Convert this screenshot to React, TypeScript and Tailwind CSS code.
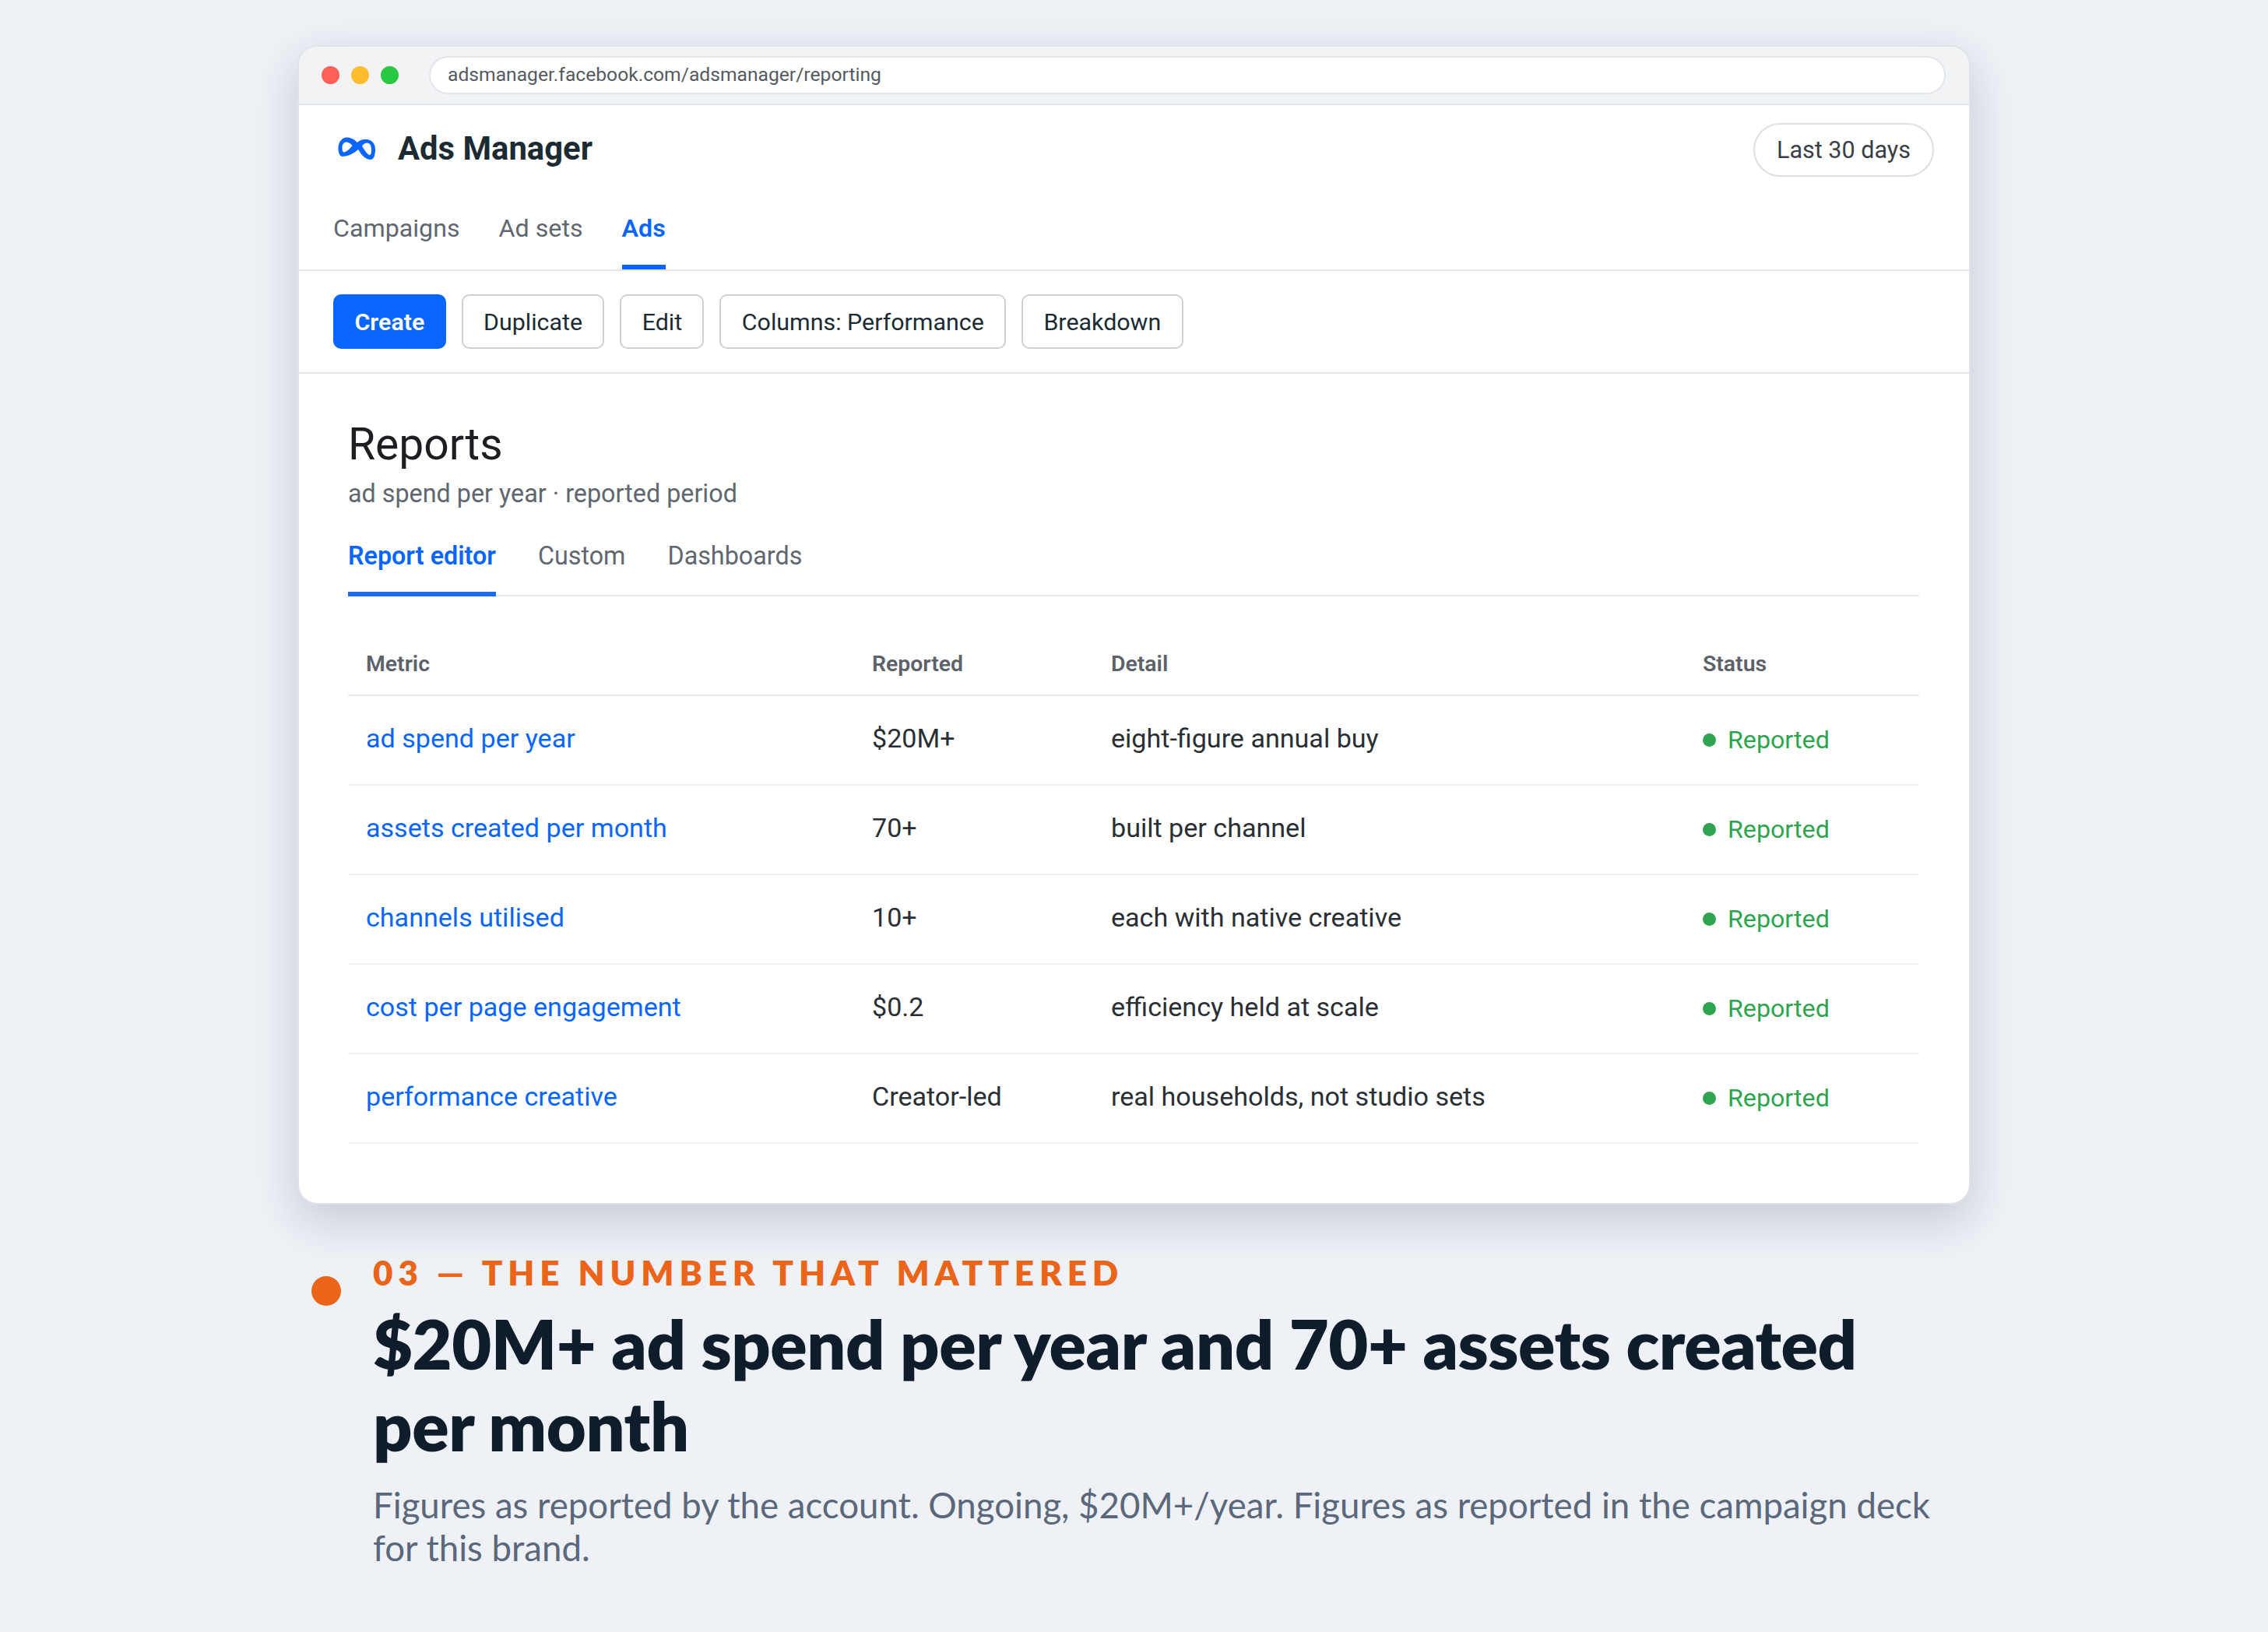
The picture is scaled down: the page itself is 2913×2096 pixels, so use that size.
const rows = [
  { metric: 'ad spend per year', value: '$20M+', detail: 'eight-figure annual buy' },
  { metric: 'assets created per month', value: '70+', detail: 'built per channel' },
  { metric: 'channels utilised', value: '10+', detail: 'each with native creative' },
  { metric: 'cost per page engagement', value: '$0.2', detail: 'efficiency held at scale' },
  { metric: 'performance creative', value: 'Creator-led', detail: 'real households, not studio sets' },
];

const toolbarButtons = ['Duplicate', 'Edit', 'Columns: Performance', 'Breakdown'];

function MetaLogo() {
  return (
    <svg viewBox="0 0 48 29" className="mb-[2px] ml-[6px] h-[29px] w-[48px]" fill="#0866ff">
      <path
        fillRule="evenodd"
        d="M0.5 14C0.5 6 6 0 12 0.5 18 1 22 4 25 7 28 4 32 2.5 37 3 44 3.5 48 9 48 16 48 23 46 29 42 29 36 29 31 24 26 16 21 21 12 25 6 25 2 25 0.5 20 0.5 14ZM5.5 13C5.5 16 6 19.5 7.5 19.5 11 19.5 15.5 15 18.5 11 16 8 13.5 6.5 11 6.5 8 6.5 5.5 9 5.5 13ZM31 11.5C34 16.5 38 23 41 23 42.5 23 43 20 43 16 43 11 41 7.5 37.5 7.5 35 7.5 33 8.5 31 11.5Z"
      />
    </svg>
  );
}

export default function App() {
  return (
    <div className="min-h-screen bg-[#eef1f6] pt-[58px] font-['Roboto',sans-serif]">
      <div className="mx-auto w-[2149px]">
        {/* Browser window */}
        <div className="overflow-hidden rounded-[26px] border-2 border-[#dfe2e9] bg-white shadow-[0_20px_60px_rgba(20,32,60,0.19)]">
          <div className="flex h-[75px] items-center border-b-2 border-[#e2e5ea] bg-[#f1f3f5] pr-[30px] pl-[29px]">
            <div className="flex items-center gap-[15px]">
              <span className="h-[23px] w-[23px] rounded-full bg-[#ff5f57]" />
              <span className="h-[23px] w-[23px] rounded-full bg-[#febc2e]" />
              <span className="h-[23px] w-[23px] rounded-full bg-[#28c840]" />
            </div>
            <div className="ml-[39px] flex h-[49px] flex-1 items-center rounded-full border-2 border-[#e2e5ea] bg-white pl-[22px] text-[24.65px] text-[#555a62]">
              adsmanager.facebook.com/adsmanager/reporting
            </div>
          </div>

          <div className="border-b-2 border-[#e2e5ea] pt-[23px] pr-[45px] pl-[44px]">
            <div className="flex h-[69px] items-center justify-between">
              <div className="flex items-center gap-[29px] pb-[3px]">
                <MetaLogo />
                <span className="text-[41.8px] font-bold text-[#1c2b33]">Ads Manager</span>
              </div>
              <div className="flex h-[69px] w-[232px] items-center justify-center rounded-full border-2 border-[#dcdfe4] text-[30.5px] text-[#3a3f47]">
                Last 30 days
              </div>
            </div>
            <div className="mt-[46px] flex gap-[50px] text-[32.2px] leading-[40px]">
              <span className="pb-[33px] text-[#606770]">Campaigns</span>
              <span className="pb-[33px] text-[#606770]">Ad sets</span>
              <span className="border-b-[6px] border-[#0866ff] pb-[27px] font-semibold text-[#0866ff]">Ads</span>
            </div>
          </div>

          <div className="flex gap-[20px] border-b-2 border-[#e2e5ea] py-[30px] pr-[45px] pl-[44px] text-[30.4px]">
            <div className="flex h-[70px] items-center rounded-[10px] bg-[#0866ff] px-[27.5px] pt-[2px] font-semibold text-white">
              Create
            </div>
            {toolbarButtons.map((label) => (
              <div
                key={label}
                className="flex h-[70px] items-center rounded-[10px] border-2 border-[#ced0d4] px-[26.3px] pt-[2px] text-[#1c2b33]"
              >
                {label}
              </div>
            ))}
          </div>

          {/* Reports */}
          <div className="pt-[57.5px] pr-[64px] pb-[76px] pl-[63px]">
            <h1 className="text-[57px] leading-[66px] text-[#1c1e21]">Reports</h1>
            <p className="mt-[8px] text-[32.3px] leading-[44px] text-[#606770]">ad spend per year · reported period</p>

            <div className="mt-[38px] flex gap-[54px] border-b-2 border-[#e8eaed] text-[32.3px] leading-[40px]">
              <span className="-mb-[2px] border-b-[6px] border-[#1a6fe8] pb-[26px] font-semibold text-[#0866ff]">Report editor</span>
              <span className="pb-[26px] text-[#606770]">Custom</span>
              <span className="pb-[26px] text-[#606770]">Dashboards</span>
            </div>

            <div className="grid grid-cols-[650px_307px_760px_301px] border-b-2 border-[#e8eaed] pt-[69px] pb-[21px] text-[28.4px] leading-[36px] font-semibold text-[#5d6169]">
              <div className="pl-[23px]">Metric</div>
              <div className="pl-[23px]">Reported</div>
              <div className="pl-[23px]">Detail</div>
              <div className="pl-[23px]">Status</div>
            </div>

            {rows.map((row) => (
              <div
                key={row.metric}
                className="grid h-[115px] grid-cols-[650px_307px_760px_301px] items-center border-b-2 border-[#f0f1f3] pb-[3px] text-[34.1px] text-[#2a2f36]"
              >
                <div className="pl-[23px] text-[#0866ff]">{row.metric}</div>
                <div className="pl-[23px]">{row.value}</div>
                <div className="pl-[23px]">{row.detail}</div>
                <div className="flex items-center gap-[15px] pt-[4px] pl-[23px] text-[32.2px] text-[#2ea44f]">
                  <span className="h-[17px] w-[17px] rounded-full bg-[#2ea44f]" />
                  Reported
                </div>
              </div>
            ))}
          </div>
        </div>

        {/* Caption */}
        <div className="mt-[61px] ml-[18px] flex gap-[41px] font-['Lato',sans-serif]">
          <span className="mt-[31px] h-[38px] w-[38px] shrink-0 rounded-full bg-[#ea6519]" />
          <div className="w-[2010px]">
            <div className="text-[44px] leading-[53px] font-extrabold tracking-[0.156em] text-[#ea6519]">
              03 — THE NUMBER THAT MATTERED
            </div>
            <h2 className="mt-[12px] text-[88px] leading-[105.6px] font-extrabold tracking-[-0.005em] text-[#0f1c2b]">
              $20M+ ad spend per year and 70+ assets created per month
            </h2>
            <p className="mt-[21px] text-[45.6px] leading-[55.7px] text-[#5b677a]">
              Figures as reported by the account. Ongoing, $20M+/year. Figures as reported in the campaign deck for this brand.
            </p>
          </div>
        </div>
      </div>
    </div>
  );
}
